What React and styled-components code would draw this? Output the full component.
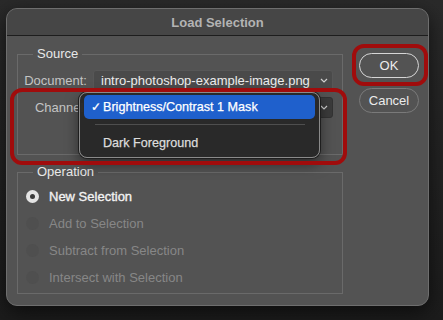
import React from 'react';
import styled, { createGlobalStyle } from 'styled-components';

const GlobalStyle = createGlobalStyle`
  html, body {
    margin: 0;
    padding: 0;
    background: linear-gradient(#2a2a2a, #1c1c1c);
    height: 100%;
  }
  body {
    font-family: "Liberation Sans", Arial, sans-serif;
    font-size: 13px;
  }
  * { box-sizing: border-box; }
`;

const Page = styled.div`
  width: 443px;
  height: 320px;
  padding: 8px 0 0 6px;
  overflow: hidden;
`;

const Dialog = styled.div`
  position: relative;
  width: 423px;
  height: 298px;
  background: #535353;
  border: 1px solid #6e6e6e;
  border-radius: 11px;
  box-shadow: 0 6px 20px rgba(0, 0, 0, 0.6);
`;

const TitleBar = styled.div`
  height: 27px;
  background: #464646;
  border-bottom: 1px solid #1d1d1d;
  border-radius: 10px 10px 0 0;
  display: flex;
  align-items: center;
  justify-content: center;
  color: #b3b3b3;
  font-weight: bold;
  font-size: 13px;
`;

const Body = styled.div`
  display: flex;
  gap: 16px;
  padding: 10px 9px 10px 10px;
`;

const LeftCol = styled.div`
  width: 326px;
  display: flex;
  flex-direction: column;
  gap: 9px;
`;

const Group = styled.fieldset`
  margin: 0;
  border: 1px solid #6a6a6a;
  padding: ${(p) => p.$pad};
  min-width: 0;
`;

const Legend = styled.legend`
  margin-left: 15px;
  padding: 0 4px;
  line-height: 16px;
  color: #e8e8e8;
  font-size: 13px;
`;

const FieldRow = styled.div`
  display: flex;
  align-items: center;
  gap: 6px;
  height: 21px;
  & + & { margin-top: 6px; }
`;

const FieldLabel = styled.span`
  width: 69px;
  text-align: right;
  color: #c4c4c4;
  white-space: nowrap;
  overflow: hidden;
`;

const SelectWrap = styled.div`
  position: relative;
  width: 240px;
  height: 21px;
`;

const Select = styled.div`
  height: 100%;
  display: flex;
  align-items: center;
  justify-content: space-between;
  padding: 0 4px 0 7px;
  background: ${(p) => (p.$open ? '#3b3b3b' : '#4a4a4a')};
  border: 1px solid ${(p) => (p.$open ? '#333' : '#575757')};
  border-radius: 3px;
  color: #ececec;
  white-space: nowrap;
`;

const Chevron = () => (
  <svg width="8" height="5" viewBox="0 0 8 5">
    <polyline points="1,1 4,4 7,1" fill="none" stroke="#d0d0d0" strokeWidth="1.2" />
  </svg>
);

const Menu = styled.div`
  position: absolute;
  left: -14px;
  top: -5px;
  width: 241px;
  height: 66px;
  padding: 2px 4px;
  background: rgba(40, 40, 40, 0.97);
  border: 1px solid #8a8a8a;
  border-radius: 8px;
  box-shadow: 0 0 0 1px #1e1e1e, 0 6px 14px rgba(0, 0, 0, 0.5);
`;

const MenuItem = styled.div`
  height: 24px;
  display: flex;
  align-items: center;
  padding-left: ${(p) => (p.$active ? '7px' : '19px')};
  border-radius: 5px;
  background: ${(p) => (p.$active ? '#1f60cc' : 'transparent')};
  color: ${(p) => (p.$active ? '#ffffff' : '#dcdcdc')};
  font-size: 12.6px;
  -webkit-text-stroke: 0.25px currentColor;
`;

const Check = styled.span`
  width: 12px;
  font-size: 12px;
`;

const Separator = styled.div`
  height: 1px;
  margin: 5px 10px 6px 11px;
  background: #4e4e4e;
`;

const RadioRow = styled.div`
  display: flex;
  align-items: center;
  gap: 10px;
  height: 27px;
  padding-left: 8px;
  color: ${(p) => (p.$disabled ? '#878787' : '#f2f2f2')};
  -webkit-text-stroke: ${(p) => (p.$disabled ? '0' : '0.35px currentColor')};
`;

const Radio = styled.span`
  width: 13px;
  height: 13px;
  border-radius: 50%;
  display: flex;
  align-items: center;
  justify-content: center;
  background: ${(p) => (p.$checked ? '#e4e4e4' : '#4f4f4f')};
  &::after {
    content: '';
    width: 5px;
    height: 5px;
    border-radius: 50%;
    background: ${(p) => (p.$checked ? '#3a3a3a' : 'transparent')};
  }
`;

const RightCol = styled.div`
  width: 60px;
  padding-top: 7px;
  display: flex;
  flex-direction: column;
  gap: 10px;
`;

const ButtonWrap = styled.div`
  position: relative;
`;

const Button = styled.button`
  width: 60px;
  height: 25px;
  border-radius: 13px;
  background: transparent;
  border: 1px solid ${(p) => (p.$primary ? '#d6d6d6' : '#7a7a7a')};
  color: #ececec;
  font-family: inherit;
  font-size: 13px;
  padding: 0;
`;

const Highlight = styled.div`
  position: absolute;
  top: ${(p) => p.$top}px;
  left: ${(p) => p.$left}px;
  width: ${(p) => p.$w}px;
  height: ${(p) => p.$h}px;
  border: 4px solid #a00c0c;
  border-radius: 12px;
  pointer-events: none;
`;

const operations = [
  { label: 'New Selection', checked: true },
  { label: 'Add to Selection' },
  { label: 'Subtract from Selection' },
  { label: 'Intersect with Selection' },
];

export default function App() {
  return (
    <Page>
      <GlobalStyle />
      <Dialog>
        <TitleBar>Load Selection</TitleBar>
        <Body>
          <LeftCol>
            <Group $pad="8px 9px 36px 0">
              <Legend>Source</Legend>
              <FieldRow>
                <FieldLabel>Document:</FieldLabel>
                <SelectWrap>
                  <Select>
                    intro-photoshop-example-image.png
                    <Chevron />
                  </Select>
                </SelectWrap>
              </FieldRow>
              <FieldRow>
                <FieldLabel>Channel:</FieldLabel>
                <SelectWrap>
                  <Select $open>
                    <span />
                    <Chevron />
                  </Select>
                  <Menu>
                    <MenuItem $active>
                      <Check>✓</Check>
                      Brightness/Contrast 1 Mask
                    </MenuItem>
                    <Separator />
                    <MenuItem>Dark Foreground</MenuItem>
                  </Menu>
                </SelectWrap>
              </FieldRow>
            </Group>
            <Group $pad="3px 0 2px 0">
              <Legend>Operation</Legend>
              {operations.map((op) => (
                <RadioRow key={op.label} $disabled={!op.checked}>
                  <Radio $checked={op.checked} />
                  {op.label}
                </RadioRow>
              ))}
            </Group>
          </LeftCol>
          <RightCol>
            <ButtonWrap>
              <Button $primary>OK</Button>
              <Highlight $top={-9} $left={-7} $w={76} $h={42} />
            </ButtonWrap>
            <ButtonWrap>
              <Button>Cancel</Button>
            </ButtonWrap>
          </RightCol>
        </Body>
        <Highlight $top={79} $left={3} $w={337} $h={77} />
      </Dialog>
    </Page>
  );
}
